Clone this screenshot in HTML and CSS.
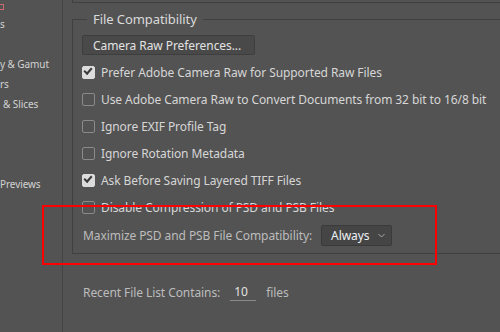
FILE: index.html
```html
<!DOCTYPE html>
<html>
<head>
  <title>Preferences - File Handling</title>
  <link rel="stylesheet" href="styles.css">
</head>
<body>
  <div class="window">
    <div class="sidebar">
      <div class="side-item"><span class="selected-mark"></span></div>
      <div class="side-item">s</div>
      <div class="side-item"></div>
      <div class="side-item">y &amp; Gamut</div>
      <div class="side-item">rs</div>
      <div class="side-item indent">&amp; Slices</div>
      <div class="side-item"></div>
      <div class="side-item"></div>
      <div class="side-item"></div>
      <div class="side-item">Previews</div>
    </div>

    <div class="main">
      <div class="top-box"></div>

      <fieldset class="group">
        <legend>File Compatibility</legend>

        <button class="ps-button">Camera Raw Preferences...</button>

        <label class="check-row">
          <input type="checkbox" checked>
          <span class="box"></span>
          <span>Prefer Adobe Camera Raw for Supported Raw Files</span>
        </label>
        <label class="check-row">
          <input type="checkbox">
          <span class="box"></span>
          <span>Use Adobe Camera Raw to Convert Documents from 32 bit to 16/8 bit</span>
        </label>
        <label class="check-row">
          <input type="checkbox">
          <span class="box"></span>
          <span>Ignore EXIF Profile Tag</span>
        </label>
        <label class="check-row">
          <input type="checkbox">
          <span class="box"></span>
          <span>Ignore Rotation Metadata</span>
        </label>
        <label class="check-row">
          <input type="checkbox" checked>
          <span class="box"></span>
          <span>Ask Before Saving Layered TIFF Files</span>
        </label>
        <label class="check-row">
          <input type="checkbox">
          <span class="box"></span>
          <span>Disable Compression of PSD and PSB Files</span>
        </label>

        <div class="select-row">
          <span class="dim-label">Maximize PSD and PSB File Compatibility:</span>
          <div class="ps-select">
            <span>Always</span>
            <svg width="7" height="5" viewBox="0 0 7 5"><path d="M0.5 1 L3.5 4 L6.5 1" fill="none" stroke="#a8a8a8" stroke-width="1"/></svg>
          </div>
        </div>
      </fieldset>

      <div class="recent-row">
        <span class="dim-label">Recent File List Contains:</span>
        <span class="num-field">10</span>
        <span class="dim-label">files</span>
      </div>
    </div>

    <div class="highlight"></div>
  </div>
</body>
</html>
```

FILE: styles.css
```css
html, body {
  margin: 0;
  padding: 0;
}
body {
  width: 500px;
  height: 332px;
  overflow: hidden;
  background-color: #535353;
  font-family: "Noto Sans", "Open Sans", sans-serif;
  font-size: 12px;
  letter-spacing: -0.08px;
  color: #d6d6d6;
}
.window {
  position: relative;
  display: flex;
  height: 332px;
}

/* left category list, cut off by the panel edge */
.sidebar {
  width: 62px;
  flex-shrink: 0;
  border-right: 1px solid #444444;
  overflow: hidden;
  margin-top: -6px;
  font-size: 10px;
}
.side-item {
  height: 20px;
  line-height: 20px;
  white-space: nowrap;
  color: #d2d2d2;
}
.side-item.indent {
  padding-left: 3px;
}
/* tail of the selected item, red */
.selected-mark {
  display: inline-block;
  width: 3px;
  height: 4px;
  margin-top: 10px;
  border-top: 1px solid #c86c6c;
  border-right: 1px solid #c86c6c;
  border-bottom: 1px solid #c86c6c;
  vertical-align: top;
}

.main {
  flex: 1;
  padding-left: 9px;
  min-width: 0;
}
.top-box {
  height: 2px;
  width: 600px;
  border-left: 1px solid #404040;
  border-bottom: 1px solid #404040;
}

.group {
  width: 600px;
  margin: 8px 0 0 0;
  padding: 0 0 7px 9px;
  border: 1px solid #404040;
  min-width: 0;
}
.group legend {
  margin-left: 5px;
  padding: 0 6px;
  font-size: 13px;
  line-height: 16px;
  color: #dadada;
}

.ps-button {
  display: block;
  width: 173px;
  height: 20px;
  margin: 8px 0 4px 0;
  padding: 0 0 0 10px;
  text-align: left;
  font-family: inherit;
  font-size: 12px;
  letter-spacing: inherit;
  color: #e2e2e2;
  background-color: #494949;
  border: 1px solid #3e3e3e;
  border-radius: 2px;
}

.check-row {
  display: flex;
  align-items: center;
  gap: 6px;
  height: 27px;
}
.check-row input {
  display: none;
}
.box {
  width: 11px;
  height: 11px;
  border: 1px solid #8a8a8a;
  border-radius: 2px;
  flex-shrink: 0;
  position: relative;
}
.check-row input:checked + .box {
  background-color: #dcdcdc;
  border-color: #dcdcdc;
}
.check-row input:checked + .box:after {
  content: "";
  position: absolute;
  left: 2px;
  top: 1px;
  width: 6px;
  height: 3px;
  border-left: 2px solid #3a3a3a;
  border-bottom: 2px solid #3a3a3a;
  transform: rotate(-48deg);
  transform-origin: 40% 70%;
}

.dim-label {
  color: #bcbcbc;
}

.select-row {
  display: flex;
  align-items: center;
  gap: 9px;
  height: 21px;
  margin-top: 4px;
  padding-left: 1px;
}
.ps-select {
  display: flex;
  align-items: center;
  justify-content: space-between;
  box-sizing: border-box;
  width: 71px;
  height: 21px;
  padding: 0 6px 0 9px;
  background-color: #454545;
  border: 1px solid #3a3a3a;
  border-radius: 2px;
  color: #eef1f6;
}

.recent-row {
  display: flex;
  align-items: center;
  height: 20px;
  margin-top: 28px;
  padding-left: 11px;
}
.num-field {
  width: 22px;
  margin: 0 10px;
  padding-left: 4px;
  border-bottom: 1px solid #8a8a8a;
  color: #e2e2e2;
  line-height: 17px;
}

/* red annotation drawn over the screenshot */
.highlight {
  position: absolute;
  left: 42px;
  top: 205px;
  width: 391px;
  height: 56px;
  border: 2px solid #ff0000;
}
```
